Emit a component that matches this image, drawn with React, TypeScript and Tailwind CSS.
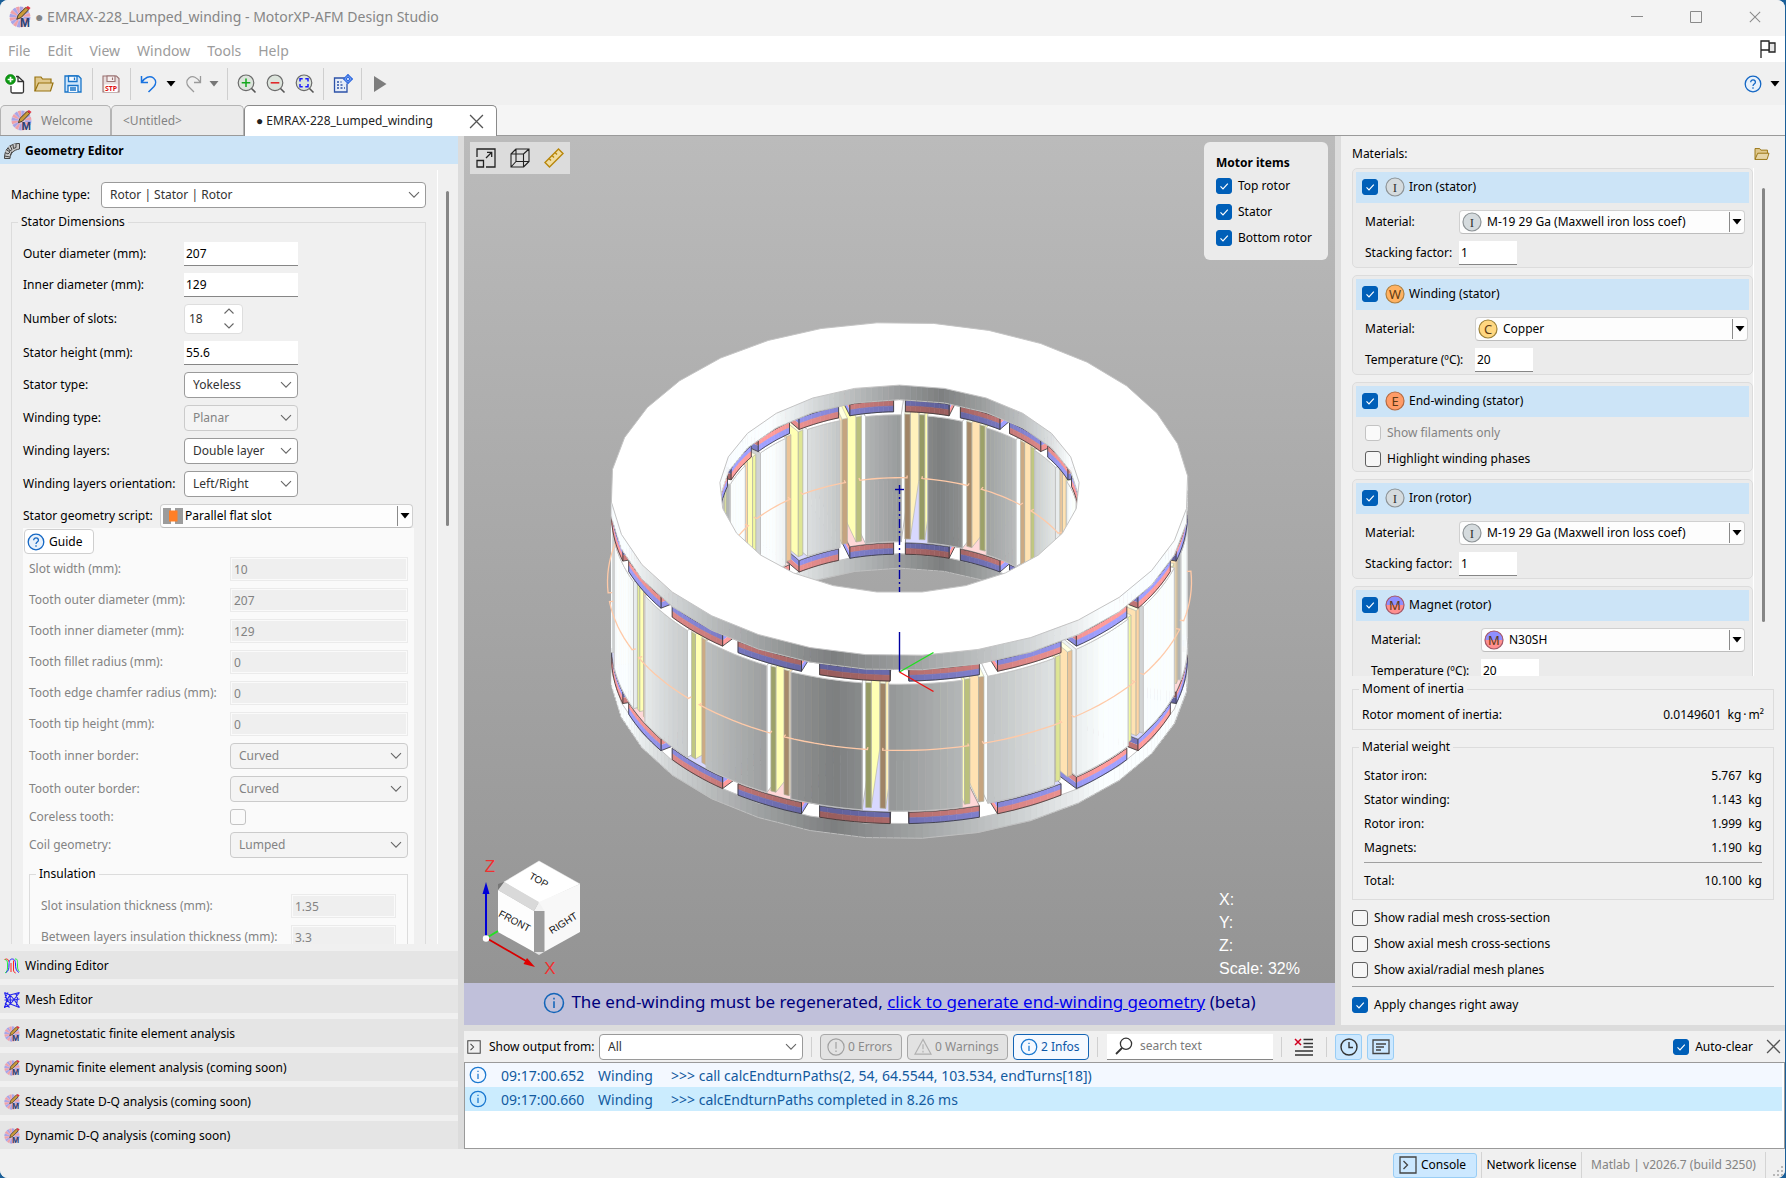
import React from "react";

// ---------------------------------------------------------------------------
// Small shared controls
// ---------------------------------------------------------------------------

function Check({
  id,
  label,
  icon,
  checked = false,
  disabled = false,
}: {
  id?: string;
  label?: string;
  icon?: React.ReactNode;
  checked?: boolean;
  disabled?: boolean;
}) {
  const box = (
    <span className="relative block h-4 w-4 shrink-0">
      <input
        id={id}
        type="checkbox"
        defaultChecked={checked}
        disabled={disabled}
        className="peer block h-4 w-4 appearance-none rounded-[3px] border border-[#5f5f5f] bg-[#f6f6f6] checked:border-[#005fb8] checked:bg-[#005fb8] disabled:border-[#c3c3c3] disabled:bg-[#fafafa]"
      />
      <svg
        viewBox="0 0 16 16"
        className="pointer-events-none absolute inset-0 hidden h-4 w-4 peer-checked:block"
        fill="none"
        stroke="#fff"
        strokeWidth="1.2"
      >
        <path d="M4.5 8.3 7 10.8 11.8 5.6" />
      </svg>
    </span>
  );
  if (!label) return box;
  return (
    <label className={`flex items-center ${disabled ? "text-[#838383]" : "text-black"}`}>
      {box}
      {icon ? <span className="mr-1 ml-[7px] flex">{icon}</span> : <span className="w-[6px]" />}
      {label}
    </label>
  );
}

function Select({
  id,
  value,
  disabled = false,
  className = "",
}: {
  id: string;
  value: string;
  disabled?: boolean;
  className?: string;
}) {
  return (
    <div className={`relative ${className}`}>
      <select
        id={id}
        disabled={disabled}
        className="block h-[26px] w-full appearance-none rounded-[4px] border border-[#9a9a9a] bg-white pr-6 pl-2 text-[#333] disabled:border-[#cbcbcb] disabled:bg-[#f4f4f4] disabled:text-[#838383]"
      >
        <option>{value}</option>
      </select>
      <svg
        viewBox="0 0 12 8"
        className="pointer-events-none absolute top-[9px] right-[6px] h-2 w-3"
        fill="none"
        stroke="#666"
        strokeWidth="1.1"
      >
        <path d="M1 1.2 6 6.2 11 1.2" />
      </svg>
    </div>
  );
}

// Drop-down with a leading picture and a split arrow
function IconSelect({
  id,
  value,
  icon,
  className = "",
  indent = "pl-[27px]",
}: {
  id: string;
  value: string;
  icon: React.ReactNode;
  className?: string;
  indent?: string;
}) {
  return (
    <div className={`relative ${className}`}>
      <select
        id={id}
        className={`block h-6 w-full appearance-none rounded-[4px] border border-[#d0d0d0] border-b-[#bdbdbd] bg-[#fdfdfd] pr-5 text-black ${indent}`}
      >
        <option>{value}</option>
      </select>
      <span className="pointer-events-none absolute inset-y-0 left-[3px] flex items-center">{icon}</span>
      <span className="pointer-events-none absolute inset-y-[2px] right-px flex w-[15px] items-center justify-center border-l border-[#8a8a8a]">
        <Caret />
      </span>
    </div>
  );
}

function Caret({ color = "#000" }: { color?: string }) {
  return (
    <svg viewBox="0 0 10 6" className="h-[6px] w-[10px]" fill={color}>
      <path d="M0.5 0h9L5 5.6z" />
    </svg>
  );
}

const fieldInput = "h-6 border-b border-[#868686] bg-white px-[2px] text-black outline-none";
const offInput =
  "h-6 border border-[#ebebeb] bg-[#efefef] px-[3px] text-[#838383] shadow-[inset_0_0_0_1px_#fafafa] outline-none";

function Badge({ letter }: { letter: string }) {
  const fills: Record<string, string> = { I: "#d5dbde", W: "#ffb262", C: "#ffd780", E: "#ff9c68", M: "#ff8f8f" };
  const edges: Record<string, string> = { I: "#8d9396", W: "#b08040", C: "#9d8238", E: "#b56a40", M: "#a45868" };
  return (
    <svg viewBox="0 0 20 20" className="h-5 w-5 shrink-0">
      <circle cx="10" cy="10" r="9" fill={fills[letter]} />
      {letter === "M" && <path d="M1 10a9 9 0 0 1 18 0z" fill="#8f8fff" />}
      <circle cx="10" cy="10" r="9" fill="none" stroke={edges[letter]} strokeWidth="1.2" />
      <text
        x="10"
        y="14.5"
        textAnchor="middle"
        fontSize="13"
        fontFamily={letter === "I" ? "Liberation Serif" : "Noto Sans"}
        fill={letter === "I" ? "#333" : "#5e3a14"}
      >
        {letter}
      </text>
    </svg>
  );
}

// ---------------------------------------------------------------------------
// Icons
// ---------------------------------------------------------------------------

function Logo({ className }: { className: string }) {
  const petals = [];
  for (let i = 0; i < 16; i++) {
    const a = (i * Math.PI) / 8;
    const b = a + 0.32;
    const pt = (r: number, t: number) => `${12 + r * Math.cos(t)} ${12 + r * Math.sin(t)}`;
    petals.push(
      <path
        key={i}
        d={`M${pt(4, a)}L${pt(11.5, a)}L${pt(11.5, b)}L${pt(4, b)}z`}
        fill={i % 2 ? "#f0a0a8" : "#a9a4e6"}
      />
    );
  }
  return (
    <svg viewBox="0 0 24 24" className={className}>
      <circle cx="12" cy="12" r="11" fill="#d9c6e2" />
      {petals}
      <path d="M8.500 14.500 10 9.800 18.500 1.500 21.500 4 13 12.800z" fill="#c99a3a" stroke="#3a3020" strokeWidth="1" />
      <path d="M18.500 1.500 20.500 0 23.500 2.300 21.500 4z" fill="#e03040" />
      <text x="17.500" y="22.500" textAnchor="middle" fontSize="13" fontWeight="700" fontFamily="Liberation Sans" fill="#2a4270">
        M
      </text>
    </svg>
  );
}

function InfoIcon({ className, color = "#1a78d0" }: { className: string; color?: string }) {
  return (
    <svg viewBox="0 0 20 20" className={className} fill="none" stroke={color} strokeWidth="1.400">
      <circle cx="10" cy="10" r="8.600" />
      <path d="M10 8.500v6M10 5.300v1.500" />
    </svg>
  );
}

function HelpIcon() {
  return (
    <svg viewBox="0 0 18 18" className="h-[18px] w-[18px]" fill="none" stroke="#1467c4" strokeWidth="1.300">
      <circle cx="9" cy="9" r="7.800" fill="#e8f1fb" />
      <path d="M6.700 7.200c0-3.100 4.700-3 4.700 0 0 1.900-2.400 1.900-2.400 3.800M9 12.200v1.500" />
    </svg>
  );
}

function FolderIcon({ className }: { className: string }) {
  return (
    <svg viewBox="0 0 20 18" className={className} fill="#e0c88c" stroke="#97720f" strokeWidth="1.200">
      <path d="M1 16V2h6l1.500 2H17v4" />
      <path d="M1 16 4.500 8H19l-2.500 8z" fill="#e6d5a8" />
    </svg>
  );
}

function CloseIcon({ className, color = "#555" }: { className: string; color?: string }) {
  return (
    <svg viewBox="0 0 14 14" className={className} stroke={color} strokeWidth="1.200" fill="none">
      <path d="M1 1l12 12M13 1 1 13" />
    </svg>
  );
}

function ConsoleIcon({ className }: { className: string }) {
  return (
    <svg viewBox="0 0 18 18" className={className} stroke="#444" strokeWidth="1.300" fill="none">
      <path d="M1 1h16v16H1zM4.500 5l4 4-4 4" />
    </svg>
  );
}

function Magnifier({ children }: { children: React.ReactNode }) {
  return (
    <svg viewBox="0 0 20 20" className="h-5 w-5" fill="none">
      <circle cx="9" cy="8.800" r="7.800" fill="#dce4dc" stroke="#6a6a6a" strokeWidth="1.200" />
      <path d="m14.500 14.500 4 4" stroke="#555" strokeWidth="1.600" />
      {children}
    </svg>
  );
}

function ToolSep() {
  return <span className="h-8 w-px bg-[#cfcfcf]" />;
}

function ToolButton({ label, className = "", children }: { label: string; className?: string; children: React.ReactNode }) {
  return (
    <button type="button" aria-label={label} className={`flex items-center justify-center ${className}`}>
      {children}
    </button>
  );
}

function Toolbar() {
  return (
    <div className="flex h-[43px] shrink-0 items-center bg-[#f0f0f0] pr-[5px] pl-[5px]">
      <ToolButton label="New">
        <svg viewBox="0 0 20 20" className="h-5 w-5" fill="#fff" stroke="#333" strokeWidth="1.300">
          <path d="M6 12v5.500c0 1 .5 1.500 1.500 1.500h9.500c1 0 1.500-.5 1.500-1.500V7.500L13 2.500H11" />
          <path d="M13 2.500v5h5.500" fill="none" />
          <circle cx="5.500" cy="5.500" r="5" fill="#0c9a12" stroke="#0a7a0e" strokeWidth=".6" />
          <path d="M5.500 2.700v5.600M2.700 5.500h5.600" stroke="#fff" strokeWidth="1.700" />
        </svg>
      </ToolButton>
      <ToolButton label="Open" className="ml-[9px]">
        <FolderIcon className="h-[18px] w-5" />
      </ToolButton>
      <ToolButton label="Save" className="ml-[10px]">
        <svg viewBox="0 0 18 18" className="h-[18px] w-[18px]" fill="#cfe6fb" stroke="#1874c8" strokeWidth="1.300">
          <path d="M1 1h13.500L17 3.500V17H1z" />
          <path d="M4.500 1h8.500v5.500H4.500zM4 17v-6.500h10V17" fill="#f4f9ff" />
          <path d="M10.500 2.500v2.500M6 13h6M6 15h6" />
        </svg>
      </ToolButton>
      <span className="ml-[10px] flex"><ToolSep /></span>
      <ToolButton label="Export STEP" className="ml-[9px]">
        <svg viewBox="0 0 18 18" className="h-[18px] w-[18px]" fill="#e8dede" stroke="#9a7070" strokeWidth="1.100">
          <path d="M1 1h13.500L17 3.500V17H1z" />
          <path d="M5 1h8v5.500H5z" fill="#f6efef" />
          <path d="M10.500 2.500v2.500" />
          <path d="M2.500 9.500h13V17h-13z" fill="#fff" stroke="none" />
          <text x="9" y="16" textAnchor="middle" fontSize="7" fontWeight="700" fontFamily="Noto Sans" fill="#e01010" stroke="none">
            STP
          </text>
        </svg>
      </ToolButton>
      <span className="ml-[10px] flex"><ToolSep /></span>
      <ToolButton label="Undo" className="ml-[9px]">
        <svg viewBox="0 0 18 18" className="h-[18px] w-[18px]" fill="none" stroke="#1a73e0" strokeWidth="1.500">
          <path d="M1.500 1v6.500H8M1.500 7.500C5 2.500 9.500 0 13.500 3c3 2.500 2.500 6 .5 8.500L8.500 17" />
        </svg>
      </ToolButton>
      <ToolButton label="Undo history" className="ml-2"><Caret /></ToolButton>
      <ToolButton label="Redo" className="ml-[9px]">
        <svg viewBox="0 0 18 18" className="h-[18px] w-[18px]" fill="none" stroke="#9a9a9a" strokeWidth="1.300">
          <path d="M15.500 1v6.500H9M15.500 7.500C12 2.500 8 0 4 3c-3 2.500-2.500 6-.5 8.500L9 17" />
        </svg>
      </ToolButton>
      <ToolButton label="Redo history" className="ml-[6px]"><Caret color="#777" /></ToolButton>
      <span className="ml-[8px] flex"><ToolSep /></span>
      <ToolButton label="Zoom in" className="ml-[9px]">
        <Magnifier><path d="M9 4.500v8.600M4.700 8.800h8.600" stroke="#12a81c" strokeWidth="1.500" /></Magnifier>
      </ToolButton>
      <ToolButton label="Zoom out" className="ml-[9px]">
        <Magnifier><path d="M4.700 8.800h8.600" stroke="#e02020" strokeWidth="1.500" /></Magnifier>
      </ToolButton>
      <ToolButton label="Zoom to fit" className="ml-[9px]">
        <Magnifier>
          <path d="M5 7.500V4.800h2.700M10.300 4.800H13v2.700M13 10.100v2.700h-2.700M7.700 12.800H5v-2.700" stroke="#1b1bff" strokeWidth="1.500" />
        </Magnifier>
      </ToolButton>
      <span className="ml-[8px] flex"><ToolSep /></span>
      <ToolButton label="Settings" className="ml-[9px]">
        <svg viewBox="0 0 20 20" className="h-5 w-5" fill="none" stroke="#2d52a8" strokeWidth="1.300">
          <path d="M12 4H1.500v14h12.500V9.500" fill="#e6edf8" />
          <path d="M4 8h2M4 11h2M4 14h2M7.500 11h2M7.500 14h2M11 14h1M7.500 8h1" strokeWidth="1.600" />
          <path d="M15 .600 19.400 5 15 9.400 10.600 5z" fill="#cfe0ff" stroke="#2f6ae0" strokeWidth="1.200" />
          <path d="M15 .600v8.800M10.600 5h8.800" stroke="#2f6ae0" strokeWidth="1.200" />
          <circle cx="15" cy="5" r="1.600" fill="#f0f6ff" stroke="#2f6ae0" strokeWidth="1.200" />
        </svg>
      </ToolButton>
      <span className="ml-[8px] flex"><ToolSep /></span>
      <ToolButton label="Run" className="ml-[11px]">
        <svg viewBox="0 0 14 16" className="h-4 w-[14px]" fill="#7d7d7d"><path d="M1 0v16l12.500-8z" /></svg>
      </ToolButton>
      <ToolButton label="Help" className="ml-auto"><HelpIcon /></ToolButton>
      <ToolButton label="Help menu" className="ml-2"><Caret /></ToolButton>
    </div>
  );
}

// ---------------------------------------------------------------------------
// Left side: geometry form
// ---------------------------------------------------------------------------

const stackedEditors = [
  "Winding Editor",
  "Mesh Editor",
  "Magnetostatic finite element analysis",
  "Dynamic finite element analysis (coming soon)",
  "Steady State D-Q analysis (coming soon)",
  "Dynamic D-Q analysis (coming soon)",
];

const slotFields = [
  ["Slot width (mm):", "10"],
  ["Tooth outer diameter (mm):", "207"],
  ["Tooth inner diameter (mm):", "129"],
  ["Tooth fillet radius (mm):", "0"],
  ["Tooth edge chamfer radius (mm):", "0"],
  ["Tooth tip height (mm):", "0"],
];

const insulationFields = [
  ["Slot insulation thickness (mm):", "1.35"],
  ["Between layers insulation thickness (mm):", "3.3"],
];

function StatorRow({ id, label, children }: { id: string; label: string; children: React.ReactNode }) {
  return (
    <div className="flex items-center">
      <label htmlFor={id} className="w-[161px] shrink-0">{label}</label>
      {children}
    </div>
  );
}

function ScriptRow({ id, label, children }: { id: string; label: string; children: React.ReactNode }) {
  return (
    <div className="flex items-center">
      <label htmlFor={id} className="w-[201px] shrink-0 text-[#838383]">{label}</label>
      {children}
    </div>
  );
}

function EditorIcon({ name }: { name: string }) {
  if (name === "Winding Editor") {
    return (
      <svg viewBox="0 0 16 16" className="h-4 w-4" fill="none" strokeWidth="1">
        <path d="M.500 1.500C3 .500 4.500 1 4.500 3.500" stroke="#f22" />
        <path d="M1 15c2-1 2.500-3 2.500-6V6C3.500 3 3 2 1 1.500" stroke="#2e4" />
        <path d="M2 14.500C4.500 13 5 11 5 7c0-4 1-6 3-6s3.500 1 3.500 5 .500 7 3.500 8.500" stroke="#22f" />
        <path d="M7 14V5M9.500 2.500V12c0 1.500.700 2.500 2.200 3" stroke="#f22" />
        <path d="M11 1c3-.500 2.500 3 2.500 6s0 5 2 6.500" stroke="#2e4" />
      </svg>
    );
  }
  if (name === "Mesh Editor") {
    return (
      <svg viewBox="0 0 16 16" className="h-4 w-4" fill="none" stroke="#2222ee" strokeWidth="1.100">
        <path d="M.500.500 6 3l9.500-2.500M.500.500 3 8 .5 15.500l6-3.500 9 3.500M6 3 3 8l3.500 4L10 7.500 6 3M10 7.500 15.500.500M10 7.500l5.500 8M3 8h7l5.500-1M6 3l.5 9M.500 8H3M12 1.500l1.500 5-1 7M4 .500 1 6M1 11l4.500 4.500" />
      </svg>
    );
  }
  return <Logo className="h-4 w-4" />;
}

function GeometryPanel() {
  return (
    <aside className="flex w-[458px] shrink-0 flex-col">
      <h2 className="flex h-7 shrink-0 items-center gap-[5px] bg-[#cce4f7] pt-px pl-1 font-bold">
        <svg viewBox="0 0 16 16" className="h-4 w-4" fill="#c8c8c8" stroke="#444" strokeWidth="1">
          <path d="M.500 15C.500 7 5 1 14 .500h1.500V6C9.500 7 6.500 10 6 15.500H.500z" />
          <path d="M1 9.500 4 11l2-2-4-2.500M4 4.500 6 8l2-1.500-2-4M9 1.500l.500 4 2.500-1V.500M.500 13l5.500 1M6.500 12 8 8.500" />
        </svg>
        Geometry Editor
      </h2>
      <div className="flex min-h-0 flex-1 overflow-hidden">
        <div className="ml-[11px] w-[415px] shrink-0 overflow-hidden pt-[18px]">
          <div className="flex items-center">
            <label htmlFor="machine" className="w-[90px] shrink-0">Machine type:</label>
            <Select id="machine" value="Rotor | Stator | Rotor" className="flex-1" />
          </div>
          <fieldset className="mt-[5px] border border-[#dcdcdc] pr-[10px] pb-3 pl-[11px]">
            <legend className="-ml-[5px] h-[18px] px-[3px] leading-[18px]">Stator Dimensions</legend>
            <div className="flex flex-col gap-[7px] pt-[11px]">
              <StatorRow id="od" label="Outer diameter (mm):">
                <input id="od" defaultValue="207" className={`${fieldInput} w-[114px]`} />
              </StatorRow>
              <StatorRow id="idm" label="Inner diameter (mm):">
                <input id="idm" defaultValue="129" className={`${fieldInput} w-[114px]`} />
              </StatorRow>
              <StatorRow id="slots" label="Number of slots:">
                <div className="flex h-[30px] w-[59px] items-center rounded-[4px] border border-[#dedede] bg-white pr-2 pl-1">
                  <input id="slots" defaultValue="18" className="w-6 flex-1 text-[#333] outline-none" />
                  <svg viewBox="0 0 10 22" className="h-[22px] w-[10px]" fill="none" stroke="#666" strokeWidth="1.100">
                    <path d="M.500 5.500 5 1l4.500 4.500M.500 15.500 5 20l4.500-4.500" />
                  </svg>
                </div>
              </StatorRow>
              <StatorRow id="sh" label="Stator height (mm):">
                <input id="sh" defaultValue="55.6" className={`${fieldInput} w-[114px]`} />
              </StatorRow>
              <StatorRow id="st" label="Stator type:">
                <Select id="st" value="Yokeless" className="w-[114px]" />
              </StatorRow>
              <StatorRow id="wt" label="Winding type:">
                <Select id="wt" value="Planar" disabled className="w-[114px]" />
              </StatorRow>
              <StatorRow id="wl" label="Winding layers:">
                <Select id="wl" value="Double layer" className="w-[114px]" />
              </StatorRow>
              <StatorRow id="wo" label="Winding layers orientation:">
                <Select id="wo" value="Left/Right" className="w-[114px]" />
              </StatorRow>
              <div className="flex items-center">
                <label htmlFor="script" className="w-[137px] shrink-0">Stator geometry script:</label>
                <IconSelect
                  id="script"
                  value="Parallel flat slot"
                  className="w-[253px]"
                  indent="pl-[24px]"
                  icon={
                    <svg viewBox="0 0 20 16" className="h-4 w-5">
                      <path d="M0 0h8v16H0zM12 0h8v16h-8z" fill="#9c9c9c" />
                      <path d="M6 2.500h8.500v11H6z" fill="#ff7f27" />
                    </svg>
                  }
                />
              </div>
            </div>
            <div className="mr-px bg-[#fafafa] px-[6px] pt-px pb-3">
              <button
                type="button"
                className="-ml-[5px] flex h-[25px] w-[70px] items-center gap-1 rounded-[4px] border border-[#cfcfcf] bg-white pl-[2px]"
              >
                <HelpIcon />
                Guide
              </button>
              <div className="flex flex-col gap-[7px] pt-[3px]">
                {slotFields.map(([label, value], i) => (
                  <ScriptRow key={label} id={`slot-${i}`} label={label}>
                    <input id={`slot-${i}`} defaultValue={value} disabled className={`${offInput} w-0 flex-1`} />
                  </ScriptRow>
                ))}
                <ScriptRow id="tib" label="Tooth inner border:">
                  <Select id="tib" value="Curved" disabled className="flex-1" />
                </ScriptRow>
                <ScriptRow id="tob" label="Tooth outer border:">
                  <Select id="tob" value="Curved" disabled className="flex-1" />
                </ScriptRow>
                <ScriptRow id="coreless" label="Coreless tooth:">
                  <Check id="coreless" disabled />
                </ScriptRow>
                <ScriptRow id="coil" label="Coil geometry:">
                  <Select id="coil" value="Lumped" disabled className="flex-1" />
                </ScriptRow>
              </div>
              <fieldset className="mt-[7px] border border-[#dcdcdc] px-[11px] pb-3">
                <legend className="-ml-[5px] h-[18px] px-[3px] leading-[18px]">Insulation</legend>
                <div className="flex flex-col gap-[7px] pt-[11px]">
                  {insulationFields.map(([label, value], i) => (
                    <div key={label} className="flex items-center text-[#838383]">
                      <label htmlFor={`ins-${i}`} className="w-[250px] shrink-0">{label}</label>
                      <input id={`ins-${i}`} defaultValue={value} disabled className={`${offInput} w-0 flex-1`} />
                    </div>
                  ))}
                </div>
              </fieldset>
            </div>
          </fieldset>
        </div>
        <div className="mt-[6px] ml-[11px] w-px bg-white" />
        <div className="mt-[27px] ml-2 h-[335px] w-[3px] rounded-full bg-[#868686]" />
      </div>
      <nav className="flex shrink-0 flex-col gap-[6px] pt-[7px]">
        {stackedEditors.map((name) => (
          <button key={name} type="button" className="flex h-7 items-center gap-[5px] bg-[#e5e5e5] pt-px pl-1 text-left">
            <EditorIcon name={name} />
            {name}
          </button>
        ))}
      </nav>
    </aside>
  );
}

// ---------------------------------------------------------------------------
// Motor model. Angles are in degrees round the axis, 0 at the viewer, positive
// to the right; heights are measured down from the top face.
// ---------------------------------------------------------------------------

const CX = 899.5;
const CY = 489;
const TILT = 0.577;
const R_OUT = 288;
const R_IN = 179;
const rad = (deg: number) => (deg * Math.PI) / 180;

type Pt = [number, number];
type Rgb = [number, number, number];

const polar = (r: number, a: number, down: number): Pt => [
  CX + r * Math.sin(rad(a)),
  CY + r * Math.cos(rad(a)) * TILT + down,
];

const toPath = (pts: Pt[]) => "M" + pts.map((p) => `${p[0].toFixed(1)} ${p[1].toFixed(1)}`).join("L") + "z";

// Brightness of a wall by the direction its normal faces
function light(normal: number) {
  let d = Math.abs((((normal + 13) % 360) + 360) % 360);
  if (d > 180) d = 360 - d;
  return Math.min(1, 0.5 + d * 0.0086);
}

const tint = (base: Rgb, k: number) => `rgb(${base.map((c) => Math.round(c * k)).join(",")})`;

const STEEL: Rgb = [250, 254, 255];
const RED: Rgb = [255, 156, 156];
const BLUE: Rgb = [160, 160, 255];
const GREEN: Rgb = [240, 248, 160];
const TAN: Rgb = [255, 212, 164];

let serial = 0;
const nextKey = () => `m${serial++}`;

// Is a wall with this normal turned toward the viewer?
const faces = (normal: number) => Math.cos(rad(normal)) > 0;

// Curved wall from angle a0 to a1, split in strips for smooth shading
function wall(r: number, a0: number, a1: number, top: number, bottom: number, inward: boolean, base = STEEL, floor = 0) {
  const out: React.ReactNode[] = [];
  const n = Math.max(2, Math.round(Math.abs(a1 - a0) / 1.5));
  for (let i = 0; i < n; i++) {
    const s = a0 + ((a1 - a0) * i) / n;
    const e = a0 + ((a1 - a0) * (i + 1)) / n;
    const normal = (s + e) / 2 + (inward ? 180 : 0);
    if (!faces(normal)) continue;
    const color = tint(base, floor + (1 - floor) * light(normal));
    out.push(
      <path
        key={nextKey()}
        d={toPath([polar(r, s, top), polar(r, e, top), polar(r, e, bottom), polar(r, s, bottom)])}
        fill={color}
        stroke={color}
        strokeWidth="0.6"
      />
    );
  }
  return out;
}

const arc = (r: number, a0: number, a1: number, down: number): Pt[] => {
  const pts: Pt[] = [];
  for (let i = 0; i <= 8; i++) pts.push(polar(r, a0 + ((a1 - a0) * i) / 8, down));
  return pts;
};

// Flat-sided rotor disc
function rotor(down: number) {
  const out: React.ReactNode[] = [];
  const thick = 14.5;
  const ring = (r: number, n: number, start: number, inward: boolean) => {
    const pts: Pt[] = [];
    const step = 360 / n;
    for (let i = 0; i < n; i++) {
      const a = start + i * step;
      const p = polar(r, a, down);
      const q = polar(r, a + step, down);
      pts.push(p);
      if (!faces(a + step / 2 + (inward ? 180 : 0))) continue;
      for (let j = 0; j < 8; j++) {
        const normal = a + (step * (j + 0.5)) / 8 + (inward ? 180 : 0);
        const at = (t: number): Pt => [p[0] + (q[0] - p[0]) * t, p[1] + (q[1] - p[1]) * t];
        const s = at(j / 8);
        const e = at((j + 1) / 8);
        const color = tint(STEEL, light(normal));
        out.push(
          <path
            key={nextKey()}
            d={toPath([s, e, [e[0], e[1] + thick], [s[0], s[1] + thick]])}
            fill={color}
            stroke={color}
            strokeWidth="0.6"
          />,
          <path
            key={nextKey()}
            d={`M${s[0]} ${s[1] + thick}L${e[0]} ${e[1] + thick}`}
            stroke="#bfbfbf"
            strokeWidth="1"
          />
        );
      }
    }
    return pts;
  };
  const inner = ring(R_IN + 1, 25, 180, true);
  const outer = ring(R_OUT + 1, 32, 4.5, false);
  out.push(
    <path key={nextKey()} d={toPath(outer) + toPath(inner)} fillRule="evenodd" fill="#fff" stroke="#c4c4c4" strokeWidth="1" />
  );
  return out;
}

function magnets(down: number) {
  const out: React.ReactNode[] = [];
  const h = 5.75;
  const order = Array.from({ length: 20 }, (_, k) => k).sort(
    (p, q) => Math.cos(rad(9 + 18 * p)) - Math.cos(rad(9 + 18 * q))
  );
  for (const k of order) {
    const c = 9 + 18 * k;
    const [a0, a1] = [c - 7.1, c + 7.1];
    const pair = k % 2 === 0 ? [RED, BLUE] : [BLUE, RED];
    // Radial ends
    for (const [a, normal] of [[a0, a0 - 90], [a1, a1 + 90]]) {
      if (!faces(normal)) continue;
      pair.forEach((base, i) => {
        const y = down + i * h;
        out.push(
          <path
            key={nextKey()}
            d={toPath([polar(R_IN, a, y), polar(R_OUT, a, y), polar(R_OUT, a, y + h), polar(R_IN, a, y + h)])}
            fill={tint(base, 0.2 + 0.8 * light(normal))}
          />
        );
      });
      out.push(
        <path
          key={nextKey()}
          d={toPath([polar(R_IN, a, down), polar(R_OUT, a, down), polar(R_OUT, a, down + 2 * h), polar(R_IN, a, down + 2 * h)])}
          fill="none"
          stroke="#333"
          strokeWidth="0.8"
        />
      );
    }
    for (const [r, inward] of [[R_IN, true], [R_OUT, false]] as [number, boolean][]) {
      if (!faces(c + (inward ? 180 : 0))) continue;
      pair.forEach((base, i) => out.push(...wall(r, a0, a1, down + i * h, down + (i + 1) * h, inward, base, 0.2)));
      out.push(
        <path
          key={nextKey()}
          d={toPath([...arc(r, a0, a1, down), ...arc(r, a0, a1, down + 2 * h).reverse()])}
          fill="none"
          stroke="#333"
          strokeWidth="0.8"
        />
      );
    }
    out.push(
      <path
        key={nextKey()}
        d={toPath([...arc(R_OUT, a0, a1, down), ...arc(R_IN, a0, a1, down).reverse()])}
        fill={k % 2 === 0 ? "#ffd8d8" : "#d8d8ff"}
        stroke="#555"
        strokeWidth="0.6"
      />
    );
  }
  return out;
}

const S_TOP = 29;
const S_BOT = 156;

// A tooth keeps its distance from the slot centre lines, so slots stay parallel
function tooth(c: number) {
  const out: React.ReactNode[] = [];
  const half = (r: number) => 10 - (Math.asin(13.3 / r) * 180) / Math.PI;
  const ho = half(R_OUT);
  const hi = half(R_IN);
  for (const side of [-1, 1]) {
    const normal = c + side * 100;
    if (!faces(normal)) continue;
    const color = tint(STEEL, Math.min(1, 0.35 + light(normal) * 0.7));
    out.push(
      <path
        key={nextKey()}
        d={toPath([
          polar(R_IN, c + side * hi, S_TOP),
          polar(R_OUT, c + side * ho, S_TOP),
          polar(R_OUT, c + side * ho, S_BOT),
          polar(R_IN, c + side * hi, S_BOT),
        ])}
        fill={color}
        stroke="#bdbdbd"
        strokeWidth="1"
      />
    );
  }
  for (const [r, h, inward] of [[R_IN, hi, true], [R_OUT, ho, false]] as [number, number, boolean][]) {
    const strips = wall(r, c - h, c + h, S_TOP, S_BOT, inward);
    if (!strips.length) continue;
    out.push(...strips);
    if (!faces(c + (inward ? 180 : 0))) continue;
    out.push(
      <path
        key={nextKey()}
        d={toPath([...arc(r, c - h, c + h, S_TOP), ...arc(r, c - h, c + h, S_BOT).reverse()])}
        fill="none"
        stroke="#c0c0c0"
        strokeWidth="1"
      />
    );
  }
  out.push(
    <path
      key={nextKey()}
      d={toPath([...arc(R_OUT, c - ho, c + ho, S_TOP), ...arc(R_IN, c - hi, c + hi, S_TOP).reverse()])}
      fill="#fff"
      stroke="#c0c0c0"
      strokeWidth="0.8"
    />
  );
  return out;
}

// Two coil sides standing in the slot centred on angle c
function coils(c: number) {
  const out: React.ReactNode[] = [];
  const at = (r: number, t: number, down: number): Pt => [
    CX + r * Math.sin(rad(c)) + t * Math.cos(rad(c)),
    CY + (r * Math.cos(rad(c)) - t * Math.sin(rad(c))) * TILT + down,
  ];
  const top = S_TOP + 1;
  const bot = S_BOT - 1;
  const rin = R_IN + 3;
  const rout = R_OUT - 3;
  const warm = Math.abs(Math.cos(rad(c))) > 0.98 ? "#fff2bc" : "#ffe2b2";
  const plates: [number, number, Rgb, string][] = [
    [-10, -4.5, GREEN, "#ffffb4"],
    [4.5, 10, TAN, warm],
  ];
  // The plate away from the viewer goes first
  if (Math.sin(rad(c)) > 0) plates.reverse();
  for (const [t0, t1, base, sideFill] of plates) {
    for (const [t, normal] of [[t0, c - 90], [t1, c + 90]]) {
      if (!faces(normal)) continue;
      out.push(
        <path
          key={nextKey()}
          d={toPath([at(rin, t, top), at(rout, t, top), at(rout, t, bot), at(rin, t, bot)])}
          fill={sideFill}
          stroke="#bdbdb0"
          strokeWidth="0.8"
        />
      );
    }
    for (const [r, normal] of [[rin, c + 180], [rout, c]]) {
      if (!faces(normal)) continue;
      out.push(
        <path
          key={nextKey()}
          d={toPath([at(r, t0, top), at(r, t1, top), at(r, t1, bot), at(r, t0, bot)])}
          fill={tint(base, 0.12 + 0.88 * light(normal))}
          stroke="#b0b0a0"
          strokeWidth="0.7"
        />
      );
    }
    out.push(
      <path
        key={nextKey()}
        d={toPath([at(rin, t0, top), at(rout, t0, top), at(rout, t1, top), at(rin, t1, top)])}
        fill="#ffffe0"
        stroke="#bdbdb0"
        strokeWidth="0.6"
      />
    );
  }
  return out;
}

function stator() {
  const parts: { depth: number; nodes: React.ReactNode[] }[] = [];
  for (let k = 0; k < 18; k++) {
    const t = 5.2 + 20 * k;
    const s = 15.2 + 20 * k;
    // The teeth that straddle the line of sight cover, or are covered by, both
    // neighbouring slots
    const front = Math.cos(rad(t));
    const depth = front > 0.99 ? 2 : front < -0.99 ? -2 : front;
    parts.push({ depth, nodes: tooth(t) });
    parts.push({ depth: Math.cos(rad(s)), nodes: coils(s) });
  }
  return parts.sort((p, q) => p.depth - q.depth).flatMap((p) => p.nodes);
}

// End-turn filaments joining neighbouring slots, hooked at both ends
function filaments(inner: boolean) {
  const out: React.ReactNode[] = [];
  const r = inner ? R_IN : R_OUT + 4;
  const hook = inner ? r + 4 : r - 4;
  const inset = inner ? 2.4 : 1.5;
  const down = inner ? 92 : 93;
  for (let k = 0; k < 18; k++) {
    const c = 5.2 + 20 * k;
    if (Math.cos(rad(c)) > -0.15 === inner) continue;
    const [a0, a1] = [c - 10 + inset, c + 10 - inset];
    const pts = [polar(hook, a0, down), ...arc(r, a0, a1, down), polar(hook, a1, down)];
    out.push(
      <path
        key={nextKey()}
        d={"M" + pts.map((p) => p.join(" ")).join("L")}
        fill="none"
        stroke="#ffcaa8"
        strokeWidth="1.300"
      />
    );
  }
  return out;
}

function MotorView() {
  serial = 0;
  return (
    <svg viewBox="464 136 871 847" className="absolute inset-0 h-full w-full" role="img" aria-label="Motor model">
      {rotor(168.5)}
      {magnets(157)}
      {stator()}
      {filaments(true)}
      {filaments(false)}
      {magnets(14.5)}
      {rotor(0)}
      <g fill="none" strokeWidth="1.400">
        <path d="M899.5 485v107" stroke="#0000a0" strokeDasharray="9 3 2 3" />
        <path d="M895 489.500h9" stroke="#0000a0" />
        <path d="M899.5 632v40" stroke="#0000a0" />
        <path d="M899.500 672 933.500 652.500" stroke="#1ee01e" />
        <path d="M899.500 672 933.500 691.500" stroke="#ee1111" />
      </g>
      <g>
        <path d="M539 861 580 884 539 903 504 882z" fill="#fff" stroke="#eee" strokeWidth=".5" />
        <path d="M504 882 539 902 534 911 498 890z" fill="#d9d9d9" />
        <path d="M504 882 498 890v-6z" fill="#777" />
        <path d="M498 890 534 911v41l-36-20z" fill="#fdfdfd" />
        <path d="M539 902 580 884v48l-36 20v-41h-5z" fill="#f8f8f8" />
        <path d="M534 911 539 902l5.500 9z" fill="#f2f2f2" />
        <path d="M534 911h10.500v41l-5.500 2-5-2z" fill="#9c9c9c" />
        <path d="M534 952h10l-5 3z" fill="#e4e4e4" />
        <g fontSize="10" fontFamily="Liberation Sans" fill="#111" textAnchor="middle">
          <text transform="translate(537 883) rotate(30)">TOP</text>
          <text transform="translate(513 924) rotate(28)">FRONT</text>
          <text transform="translate(565 926) rotate(-32)">RIGHT</text>
        </g>
        <path d="M486 938V892" stroke="#0000d8" strokeWidth="2" />
        <path d="M486 882l3.500 12h-7z" fill="#0000d8" />
        <path d="M488 937l10-6" stroke="#22e022" strokeWidth="2" />
        <path d="M488 939 526 961" stroke="#d80000" strokeWidth="1.800" />
        <path d="M535 967l-11.500-3 3.500-6z" fill="#e00000" />
        <circle cx="486" cy="938.500" r="3.200" fill="#fff" />
        <g fontSize="17" fontFamily="Liberation Sans" fill="#f03030" textAnchor="middle">
          <text x="490" y="872">Z</text>
          <text x="550" y="974">X</text>
        </g>
      </g>
    </svg>
  );
}

function Viewport() {
  return (
    <main className="flex min-w-0 flex-1 flex-col">
      <div className="relative min-h-0 flex-1 bg-linear-to-b from-[#bbbbbb] to-[#949494]">
        <MotorView />
        <div className="absolute top-[6px] left-[6px] flex h-8 items-center gap-[14px] bg-[#dcdcdc] px-[6px]">
          <ToolButton label="Fit view">
            <svg viewBox="0 0 20 20" className="h-5 w-5" fill="none" stroke="#222" strokeWidth="1.300">
              <path d="M1 9V1h18v18h-9M1 12.500h6.500V19H1zM10 10l5.500-5.500M11 4.300h4.700V9" />
            </svg>
          </ToolButton>
          <ToolButton label="Projection">
            <svg viewBox="0 0 20 20" className="h-5 w-5" fill="none" stroke="#222" strokeWidth="1.100">
              <path d="M1 6h12.500v13H1zM6 1h13v12.500H6zM1 6l5-5M13.500 6 19 1M13.500 19l5.500-5.500M1 19l5-5.500" />
            </svg>
          </ToolButton>
          <ToolButton label="Measure">
            <svg viewBox="0 0 20 20" className="h-5 w-5" fill="#f0dca0" stroke="#b8860b" strokeWidth="1.400">
              <path d="M1 14.500 14.500 1 19 5.500 5.500 19z" />
              <path d="M5 10.500 7 12.500M8 7.500l2 2M11 4.500l2 2" />
            </svg>
          </ToolButton>
        </div>
        <div className="absolute top-[6px] right-[7px] flex h-[118px] w-[124px] flex-col rounded-[6px] bg-[#ebebeb] pt-[13px] pl-3">
          <h3 className="mb-[7px] font-bold">Motor items</h3>
          <div className="flex flex-col gap-[10px]">
            <Check label="Top rotor" checked />
            <Check label="Stator" checked />
            <Check label="Bottom rotor" checked />
          </div>
        </div>
        <div className="absolute right-[35px] bottom-[3px] w-[81px] font-['Liberation_Sans',Arial,sans-serif] text-[16px] leading-[23px] whitespace-nowrap text-white">
          <p>X:</p>
          <p>Y:</p>
          <p>Z:</p>
          <p>Scale: 32%</p>
        </div>
      </div>
      <p className="flex h-[42px] shrink-0 items-center justify-center gap-[6px] bg-[#c0c0da] pb-1 text-[17px] leading-6 text-[#00007c]">
        <InfoIcon className="mt-[2px] h-[22px] w-[22px]" color="#1264b8" />
        <span>
          The end-winding must be regenerated,{" "}
          <a href="#generate" className="text-[#0000ee] underline">click to generate end-winding geometry</a> (beta)
        </span>
      </p>
    </main>
  );
}

// ---------------------------------------------------------------------------
// Right side: materials
// ---------------------------------------------------------------------------

function MaterialGroup({ letter, title, children }: { letter: string; title: string; children: React.ReactNode }) {
  return (
    <section className="shrink-0 rounded-[5px] border border-[#dcdcdc] bg-[#ebebeb] p-[3px] pb-px">
      <h3 className="flex h-[31px] items-center bg-[#cce4f7] pb-px pl-[6px]">
        <Check label={title} checked icon={<Badge letter={letter} />} />
      </h3>
      {children}
    </section>
  );
}

function MaterialFields({
  id,
  letter,
  material,
  prop,
  value,
  pad,
  labelWidth,
}: {
  id: string;
  letter: string;
  material: string;
  prop: string;
  value: string;
  pad: string;
  labelWidth: string;
}) {
  return (
    <div className={`flex flex-col gap-[7px] pt-[7px] pb-px ${pad}`}>
      <div className="flex items-center">
        <label htmlFor={`${id}-mat`} className={`shrink-0 ${labelWidth}`}>Material:</label>
        <IconSelect id={`${id}-mat`} value={material} className="flex-1" icon={<Badge letter={letter} />} />
      </div>
      <div className="flex items-center">
        <label htmlFor={`${id}-val`} className={`shrink-0 ${labelWidth}`}>{prop}</label>
        <input id={`${id}-val`} defaultValue={value} className={`${fieldInput} w-[58px]`} />
      </div>
    </div>
  );
}

const weights = [
  ["Stator iron:", "5.767"],
  ["Stator winding:", "1.143"],
  ["Rotor iron:", "1.999"],
  ["Magnets:", "1.190"],
];

function MaterialsPanel() {
  return (
    <aside className="flex w-[444px] shrink-0 flex-col px-[11px]">
      <div className="flex h-8 shrink-0 items-center justify-between pt-[3px]">
        <h2>Materials:</h2>
        <ToolButton label="Open materials" className="mr-1"><FolderIcon className="h-[14px] w-4" /></ToolButton>
      </div>
      <div className="flex min-h-0 flex-1 overflow-hidden">
        <div className="flex w-[401px] flex-col gap-[7px] overflow-hidden">
          <MaterialGroup letter="I" title="Iron (stator)">
            <MaterialFields id="is" letter="I" material="M-19 29 Ga (Maxwell iron loss coef)" prop="Stacking factor:" value="1" pad="pr-1 pl-[9px]" labelWidth="w-[94px]" />
          </MaterialGroup>
          <MaterialGroup letter="W" title="Winding (stator)">
            <MaterialFields id="ws" letter="C" material="Copper" prop="Temperature (ºC):" value="20" pad="pr-px pl-[9px]" labelWidth="w-[110px]" />
          </MaterialGroup>
          <MaterialGroup letter="E" title="End-winding (stator)">
            <div className="flex flex-col gap-[10px] pt-2 pb-[3px] pl-[9px]">
              <Check label="Show filaments only" disabled />
              <Check label="Highlight winding phases" />
            </div>
          </MaterialGroup>
          <MaterialGroup letter="I" title="Iron (rotor)">
            <MaterialFields id="ir" letter="I" material="M-19 29 Ga (Maxwell iron loss coef)" prop="Stacking factor:" value="1" pad="pr-1 pl-[9px]" labelWidth="w-[94px]" />
          </MaterialGroup>
          <MaterialGroup letter="M" title="Magnet (rotor)">
            <MaterialFields id="mr" letter="M" material="N30SH" prop="Temperature (ºC):" value="20" pad="pr-1 pl-[15px]" labelWidth="w-[110px]" />
          </MaterialGroup>
        </div>
        <div className="w-px bg-white" />
        <div className="mt-5 ml-2 h-[434px] w-[3px] rounded-full bg-[#868686]" />
      </div>

      <div className="shrink-0 pt-1">
        <fieldset className="border border-[#dcdcdc] px-[9px] pb-[6px]">
          <legend className="-ml-[3px] h-[18px] px-[3px] leading-[18px]">Moment of inertia</legend>
          <dl className="flex justify-between pt-[9px]">
            <dt>Rotor moment of inertia:</dt>
            <dd>0.0149601&nbsp; kg&thinsp;·&thinsp;m²</dd>
          </dl>
        </fieldset>
        <fieldset className="mt-2 border border-[#dcdcdc] px-[11px] pb-[6px]">
          <legend className="-ml-[5px] h-[18px] px-[3px] leading-[18px]">Material weight</legend>
          <dl className="pt-2">
            {weights.map(([name, kg]) => (
              <div key={name} className="flex h-6 items-center justify-between">
                <dt>{name}</dt>
                <dd>{kg}&nbsp; kg</dd>
              </div>
            ))}
            <div className="mt-[2px] flex h-[31px] items-center justify-between border-t border-[#a0a0a0] pt-[6px]">
              <dt>Total:</dt>
              <dd>10.100&nbsp; kg</dd>
            </div>
          </dl>
        </fieldset>
        <div className="mt-[10px] flex flex-col gap-[10px]">
          <Check label="Show radial mesh cross-section" />
          <Check label="Show axial mesh cross-sections" />
          <Check label="Show axial/radial mesh planes" />
        </div>
        <div className="mt-2 mb-3 border-t border-[#a0a0a0] pt-[10px]">
          <Check label="Apply changes right away" checked />
        </div>
      </div>
    </aside>
  );
}

// ---------------------------------------------------------------------------
// Console
// ---------------------------------------------------------------------------

const log = [
  { time: "09:17:00.652", text: ">>> call calcEndturnPaths(2, 54, 64.5544, 103.534, endTurns[18])", row: "bg-[#f3f8ff]" },
  { time: "09:17:00.660", text: ">>> calcEndturnPaths completed in 8.26 ms", row: "bg-[#cbecfe]" },
];

function ConsoleSep({ className }: { className: string }) {
  return <span className={`h-5 w-px bg-[#d0d0d0] ${className}`} />;
}

function Console() {
  const off = "flex h-[26px] items-center rounded-[4px] border border-[#a8a8a8] bg-[#e2e2e2] text-[#8a8a8a]";
  return (
    <section className="flex h-[118px] shrink-0 flex-col bg-[#f0f0f0]">
      <div className="flex h-[31px] shrink-0 items-center pr-1 pl-[3px]">
        <ConsoleIcon className="mr-2 h-[14px] w-[14px]" />
        <label htmlFor="source" className="w-[110px]">Show output from:</label>
        <Select id="source" value="All" className="w-[204px]" />
        <ConsoleSep className="mr-2 ml-2" />
        <button type="button" className={`${off} w-[82px] gap-[3px] pl-[6px]`}>
          <svg viewBox="0 0 20 20" className="h-[18px] w-[18px]" fill="none" stroke="#a0a0a0" strokeWidth="1.300">
            <circle cx="10" cy="10" r="9" />
            <path d="M10 4.500v7.500M10 13.800v1.700" />
          </svg>
          0 Errors
        </button>
        <button type="button" className={`${off} ml-[5px] w-[101px] gap-[3px] pl-[6px]`}>
          <svg viewBox="0 0 20 20" className="h-[18px] w-[18px]" fill="none" stroke="#b0b0b0" strokeWidth="1.300">
            <path d="M10 1.500 19 18H1zM10 7v5.500M10 14.300v1.700" />
          </svg>
          0 Warnings
        </button>
        <button
          type="button"
          className="ml-[5px] flex h-[26px] w-[76px] items-center gap-[3px] rounded-[4px] border border-[#1464b4] bg-[#f5f9ff] pl-[6px] text-[#0e58a8]"
        >
          <InfoIcon className="h-[18px] w-[18px]" />2 Infos
        </button>
        <ConsoleSep className="mr-[9px] ml-2" />
        <div className="flex h-[26px] w-[166px] items-center border-b border-[#868686] bg-white pl-2">
          <svg viewBox="0 0 18 18" className="mr-[7px] h-[18px] w-[18px]" fill="none" stroke="#333">
            <circle cx="11" cy="6.800" r="5.600" strokeWidth="1.300" />
            <path d="M7 11 1 17" strokeWidth="1.800" />
          </svg>
          <input
            aria-label="Search text"
            placeholder="search text"
            className="w-0 flex-1 outline-none placeholder:text-[#7a7a7a]"
          />
        </div>
        <ConsoleSep className="mr-3 ml-2" />
        <ToolButton label="Clear console">
          <svg viewBox="0 0 20 18" className="h-[18px] w-5" fill="none" stroke="#333" strokeWidth="1.500">
            <path d="M9.500 1.500H19M9.500 5.500H19M9.500 9H19M1 13h18M1 17h18" />
            <path d="M1 1l6 6M7 1 1 7" stroke="#d00020" />
          </svg>
        </ToolButton>
        <ConsoleSep className="mr-2 ml-3" />
        <ToolButton label="Show time" className="h-[26px] w-[27px] rounded-[3px] border border-[#99cdf5] bg-[#cce8ff]">
          <svg viewBox="0 0 18 18" className="h-[18px] w-[18px]" fill="none" stroke="#333" strokeWidth="1.400">
            <circle cx="9" cy="9" r="8" />
            <path d="M9 4v5.500h4" />
          </svg>
        </ToolButton>
        <ToolButton label="Show source" className="ml-[5px] h-[26px] w-[27px] rounded-[3px] border border-[#99cdf5] bg-[#cce8ff]">
          <svg viewBox="0 0 18 16" className="h-4 w-[18px]" fill="none" stroke="#444" strokeWidth="1.300">
            <path d="M1 1h16v13.500H1zM4 5h10M4 8h8M4 11h5" />
          </svg>
        </ToolButton>
        <div className="mr-[13px] ml-auto"><Check label="Auto-clear" checked /></div>
        <ToolButton label="Close console"><CloseIcon className="h-[15px] w-[15px]" /></ToolButton>
      </div>
      <ul className="flex-1 border border-[#9a9a9a] bg-white pr-[2px] text-[14px] leading-5 text-[#125a9e]">
        {log.map((entry) => (
          <li key={entry.time} className={`flex h-6 items-center pt-[2px] pl-1 ${entry.row}`}>
            <InfoIcon className="mr-[14px] mb-[2px] h-[18px] w-[18px]" />
            <span className="w-[97px] shrink-0">{entry.time}</span>
            <span className="w-[73px] shrink-0">Winding</span>
            <span className="whitespace-nowrap">{entry.text}</span>
          </li>
        ))}
      </ul>
    </section>
  );
}

function StatusBar() {
  return (
    <footer className="flex h-[29px] shrink-0 items-center justify-end bg-[#f0f0f0] pt-[3px]">
      <button
        type="button"
        className="flex h-[25px] w-[84px] items-center gap-1 rounded-[3px] border border-[#99cdf5] bg-[#cce8ff] pl-[5px]"
      >
        <ConsoleIcon className="h-[18px] w-[18px]" />
        Console
      </button>
      <span className="ml-1 h-[26px] w-px bg-[#d4d4d4]" />
      <span className="w-[99px] text-center whitespace-nowrap">Network license</span>
      <span className="h-[26px] w-px bg-[#d4d4d4]" />
      <span className="w-[183px] text-center whitespace-nowrap text-[#838383]">Matlab | v2026.7 (build 3250)</span>
      <span className="h-[26px] w-px bg-[#d4d4d4]" />
      <svg viewBox="0 0 12 12" className="mr-px ml-[6px] h-3 w-3 self-end" fill="#b8b8b8">
        <path d="M9 0h2v2H9zM9 4h2v2H9zM5 4h2v2H5zM9 8h2v2H9zM5 8h2v2H5zM1 8h2v2H1z" />
      </svg>
    </footer>
  );
}

// ---------------------------------------------------------------------------
// Window
// ---------------------------------------------------------------------------

const menus = ["File", "Edit", "View", "Window", "Tools", "Help"];

export default function App() {
  return (
    <div className="h-screen bg-[#1b5f98] pr-px font-['Noto_Sans',sans-serif] text-[12px] leading-4 text-black">
      <div className="flex h-full flex-col overflow-hidden rounded-[8px] bg-[#f0f0f0]">
        <header className="flex h-9 shrink-0 items-center bg-[#f3f3f3] pb-[2px] pl-[9px] text-[#868686]">
          <Logo className="h-[22px] w-[22px]" />
          <h1 className="ml-1 text-[14px] leading-5">● EMRAX-228_Lumped_winding - MotorXP-AFM Design Studio</h1>
          <div className="ml-auto flex items-center gap-[47px] pr-6">
            <ToolButton label="Minimize">
              <svg viewBox="0 0 12 12" className="h-3 w-3" stroke="#8a8a8a"><path d="M0 5.500h12" /></svg>
            </ToolButton>
            <ToolButton label="Maximize">
              <svg viewBox="0 0 12 12" className="h-3 w-3" stroke="#8a8a8a" fill="none"><path d="M.500.500h11v11H.500z" /></svg>
            </ToolButton>
            <ToolButton label="Close"><CloseIcon className="h-3 w-3" color="#8a8a8a" /></ToolButton>
          </div>
        </header>
        <nav className="flex h-[26px] shrink-0 items-center gap-[17px] bg-white pt-[3px] pr-[9px] pl-2 text-[14px] leading-5 text-[#9c9c9c]">
          {menus.map((m) => (
            <button key={m} type="button">{m}</button>
          ))}
          <ToolButton label="Notifications" className="mb-[3px] ml-auto">
            <svg viewBox="0 0 16 18" className="h-[18px] w-4" fill="#e6e6e6" stroke="#222" strokeWidth="1.300">
              <path d="M9 3h6v9H9z" />
              <path d="M1 18V1h8v9H1" fill="#fff" />
            </svg>
          </ToolButton>
        </nav>
        <Toolbar />
        <div className="flex h-[31px] shrink-0 border-b border-[#9a9a9a] bg-[#f5f5f5] text-[#838383]">
          <button type="button" className="flex w-[111px] items-center gap-[9px] rounded-t-[5px] border border-b-0 border-[#b4b4b4] bg-[#ebebeb] pl-[10px]">
            <Logo className="h-[21px] w-[21px]" />
            Welcome
          </button>
          <button type="button" className="flex w-[133px] items-center rounded-t-[5px] border border-b-0 border-[#b4b4b4] bg-[#ebebeb] pl-[11px]">
            &lt;Untitled&gt;
          </button>
          <div className="-mb-px flex w-[253px] items-center rounded-t-[5px] border border-b-0 border-[#8a8a8a] bg-white pr-3 pl-[11px] text-[#222]">
            <button type="button" className="flex-1 text-left whitespace-nowrap">● EMRAX-228_Lumped_winding</button>
            <ToolButton label="Close tab"><CloseIcon className="h-[15px] w-[15px]" /></ToolButton>
          </div>
        </div>
        <div className="flex min-h-0 flex-1">
          <GeometryPanel />
          <div className="w-[6px] shrink-0 bg-[#dcdcdc]" />
          <div className="flex min-w-0 flex-1 flex-col">
            <div className="flex min-h-0 flex-1">
              <Viewport />
              <div className="w-[6px] shrink-0 bg-[#dcdcdc]" />
              <MaterialsPanel />
            </div>
            <div className="h-[6px] shrink-0 bg-[#dcdcdc]" />
            <Console />
          </div>
        </div>
        <StatusBar />
      </div>
    </div>
  );
}
